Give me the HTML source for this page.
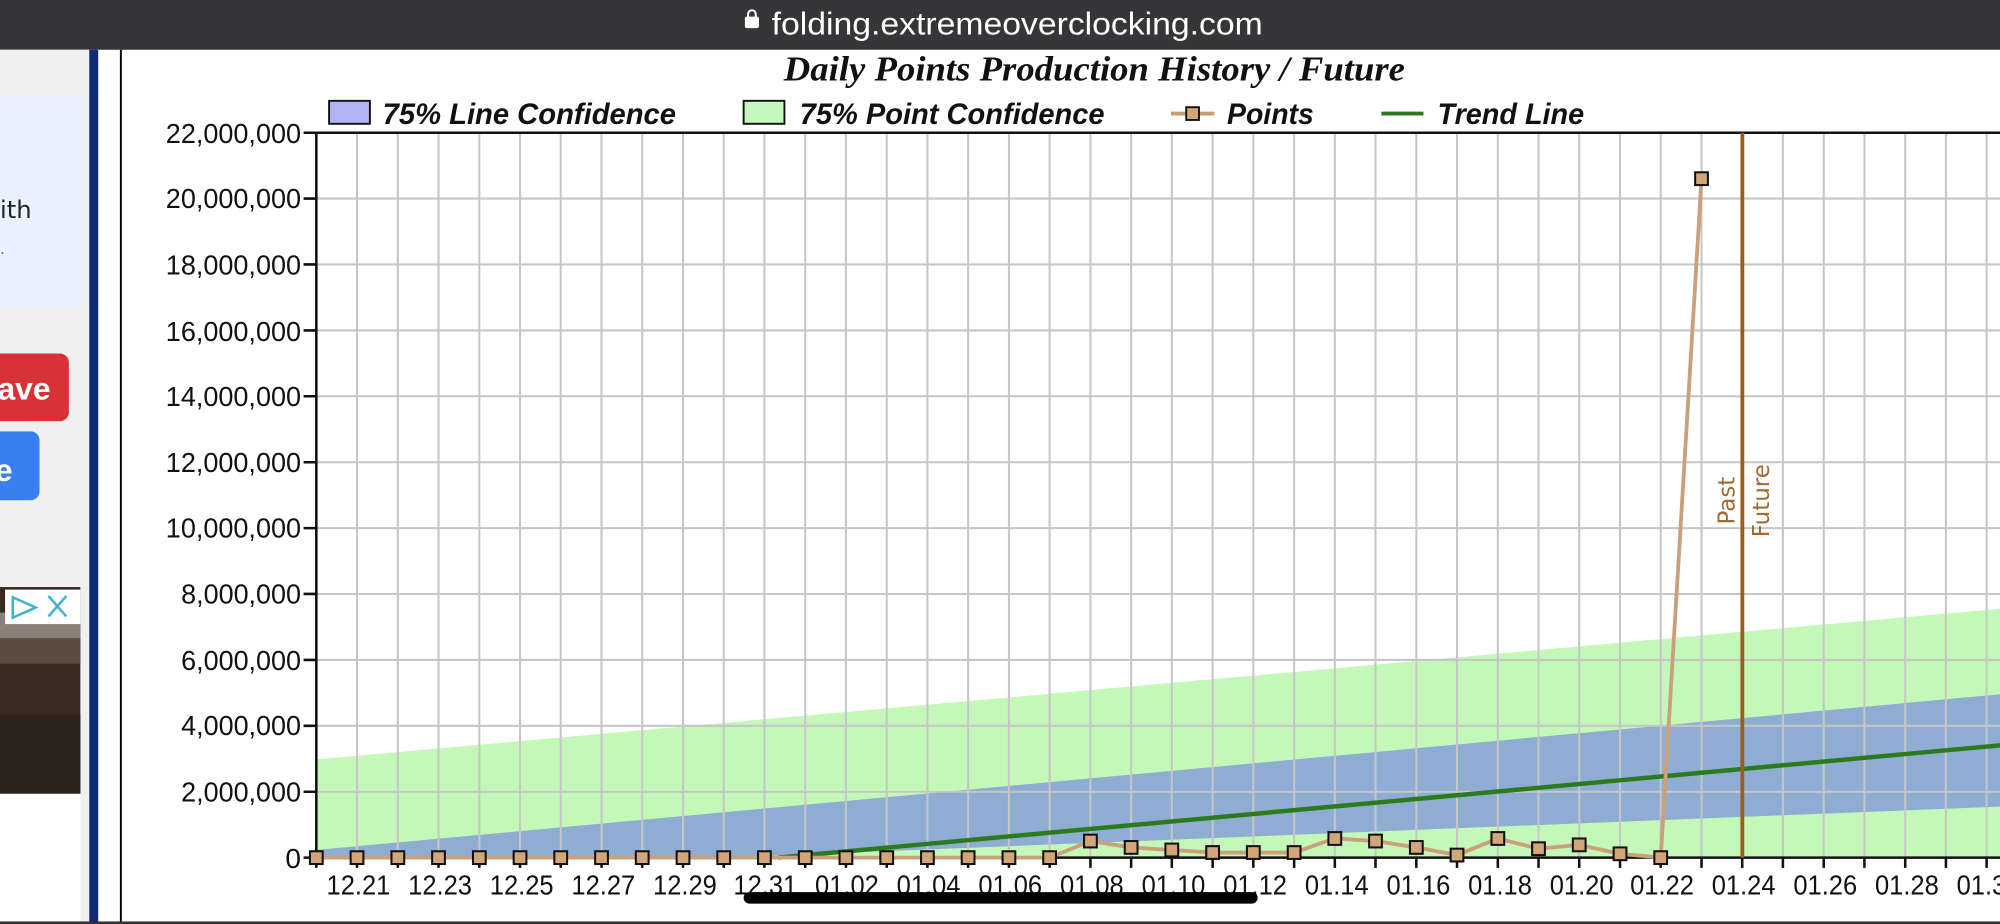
<!DOCTYPE html>
<html><head><meta charset="utf-8"><style>
html,body{margin:0;padding:0;width:2000px;height:924px;overflow:hidden;background:#fff}
svg{display:block}
</style></head><body>
<svg width="2000" height="924" viewBox="0 0 1568 724" preserveAspectRatio="none" xmlns="http://www.w3.org/2000/svg">
<rect x="0" y="0" width="1568" height="724" fill="#fff"/>
<rect x="0" y="0" width="1568" height="39" fill="#363638"/>
<rect x="584" y="13" width="11" height="9" rx="1.5" fill="#fff"/>
<path d="M586.5 13.5 v-2.5 a3 3 0 0 1 6 0 v2.5" fill="none" stroke="#fff" stroke-width="1.6"/>
<text x="605" y="27" font-family="Liberation Sans, sans-serif" font-size="25" fill="#fff" textLength="385" lengthAdjust="spacingAndGlyphs">folding.extremeoverclocking.com</text>
<rect x="0" y="39" width="70" height="685" fill="#f0f0f0"/>
<rect x="0" y="75" width="65" height="165" fill="#e8f1fd"/>
<text x="0" y="171" font-family="DejaVu Sans, sans-serif" font-size="19" fill="#222">ith</text>
<text x="0" y="199" font-family="DejaVu Sans, sans-serif" font-size="12" fill="#666">.</text>
<rect x="-10" y="277" width="64" height="53" rx="7" fill="#d93236"/>
<text x="-2" y="313" font-family="Liberation Sans, sans-serif" font-size="25" font-weight="bold" fill="#fff">ave</text>
<rect x="-10" y="338" width="41" height="54" rx="7" fill="#3a7ff0"/>
<text x="-4" y="377" font-family="Liberation Sans, sans-serif" font-size="25" font-weight="bold" fill="#fff">e</text>
<rect x="0" y="460" width="63" height="162" fill="#3a2a22"/>
<rect x="0" y="480" width="63" height="30" fill="#8a8078"/>
<rect x="0" y="500" width="63" height="20" fill="#5a4c40"/>
<rect x="0" y="560" width="63" height="62" fill="#2e221c"/>
<rect x="4" y="462" width="59" height="27" fill="#fff"/>
<path d="M10 468 L28 476 L10 484 Z" fill="none" stroke="#3fb3d0" stroke-width="2"/>
<path d="M38 467 L52 483 M52 467 L38 483" stroke="#3fb3d0" stroke-width="2"/>
<rect x="0" y="622" width="63" height="102" fill="#fff"/>
<rect x="70" y="39" width="7" height="685" fill="#0d2a78"/>
<rect x="94" y="39" width="1.5" height="685" fill="#000"/>
<text x="858" y="63" text-anchor="middle" font-family="Liberation Serif, serif" font-size="27" font-weight="bold" font-style="italic" fill="#111" textLength="487" lengthAdjust="spacingAndGlyphs">Daily Points Production History / Future</text>
<g font-family="Liberation Sans, sans-serif" font-size="23" font-weight="bold" font-style="italic" fill="#111">
<rect x="258" y="79" width="32" height="18" fill="#b0b4f6" stroke="#111" stroke-width="1.5"/>
<text x="300" y="97" textLength="230" lengthAdjust="spacingAndGlyphs">75% Line Confidence</text>
<rect x="583" y="79" width="32" height="18" fill="#c4f7bd" stroke="#111" stroke-width="1.5"/>
<text x="627" y="97" textLength="239" lengthAdjust="spacingAndGlyphs">75% Point Confidence</text>
<line x1="918" y1="89" x2="952" y2="89" stroke="#c89c70" stroke-width="3"/>
<rect x="930" y="84" width="10" height="10" fill="#d2a679" stroke="#111" stroke-width="1.5"/>
<text x="962" y="97" textLength="68" lengthAdjust="spacingAndGlyphs">Points</text>
<line x1="1083" y1="89" x2="1116" y2="89" stroke="#2c7a1e" stroke-width="3"/>
<text x="1127" y="97" textLength="115" lengthAdjust="spacingAndGlyphs">Trend Line</text>
</g>
<polygon points="248,595 1568,477 1568,672 248,672" fill="#c4f8b8"/>
<polygon points="248,666 1568,544 1568,632 566,672 248,672" fill="#8fadd3"/>
<path stroke="#c6c6c6" stroke-width="1.6" fill="none" d="M279.9 104V672M311.9 104V672M343.8 104V672M375.8 104V672M407.7 104V672M439.6 104V672M471.6 104V672M503.5 104V672M535.5 104V672M567.4 104V672M599.3 104V672M631.3 104V672M663.2 104V672M695.2 104V672M727.1 104V672M759 104V672M791 104V672M822.9 104V672M854.9 104V672M886.8 104V672M918.7 104V672M950.7 104V672M982.6 104V672M1014.6 104V672M1046.5 104V672M1078.4 104V672M1110.4 104V672M1142.3 104V672M1174.3 104V672M1206.2 104V672M1238.1 104V672M1270.1 104V672M1302 104V672M1334 104V672M1397.8 104V672M1429.8 104V672M1461.7 104V672M1493.7 104V672M1525.6 104V672M1557.5 104V672
M248 620.4H1568M248 568.7H1568M248 517.1H1568M248 465.4H1568M248 413.8H1568M248 362.2H1568M248 310.5H1568M248 258.9H1568M248 207.2H1568M248 155.6H1568"/>
<path stroke="#111" stroke-width="2" fill="none" d="M248 104H1568M248 104V672M248 672H1568
M238 104H248M238 155.6H248M238 207.2H248M238 258.9H248M238 310.5H248M238 362.2H248M238 413.8H248M238 465.4H248M238 517.1H248M238 568.7H248M238 620.4H248M238 672H248
M248 672v8M279.9 672v8M311.9 672v8M343.8 672v8M375.8 672v8M407.7 672v8M439.6 672v8M471.6 672v8M503.5 672v8M535.5 672v8M567.4 672v8M599.3 672v8M631.3 672v8M663.2 672v8M695.2 672v8M727.1 672v8M759 672v8M791 672v8M822.9 672v8M854.9 672v8M886.8 672v8M918.7 672v8M950.7 672v8M982.6 672v8M1014.6 672v8M1046.5 672v8M1078.4 672v8M1110.4 672v8M1142.3 672v8M1174.3 672v8M1206.2 672v8M1238.1 672v8M1270.1 672v8M1302 672v8M1334 672v8M1365.9 672v8M1397.8 672v8M1429.8 672v8M1461.7 672v8M1493.7 672v8M1525.6 672v8M1557.5 672v8"/>
<g font-family="Liberation Sans, sans-serif" font-size="22" fill="#111" text-anchor="end" lengthAdjust="spacingAndGlyphs">
<text x="236" y="112" textLength="106" lengthAdjust="spacingAndGlyphs">22,000,000</text>
<text x="236" y="163" textLength="106" lengthAdjust="spacingAndGlyphs">20,000,000</text>
<text x="236" y="215" textLength="106" lengthAdjust="spacingAndGlyphs">18,000,000</text>
<text x="236" y="267" textLength="106" lengthAdjust="spacingAndGlyphs">16,000,000</text>
<text x="236" y="318" textLength="106" lengthAdjust="spacingAndGlyphs">14,000,000</text>
<text x="236" y="370" textLength="106" lengthAdjust="spacingAndGlyphs">12,000,000</text>
<text x="236" y="421" textLength="106" lengthAdjust="spacingAndGlyphs">10,000,000</text>
<text x="236" y="473" textLength="94" lengthAdjust="spacingAndGlyphs">8,000,000</text>
<text x="236" y="525" textLength="94" lengthAdjust="spacingAndGlyphs">6,000,000</text>
<text x="236" y="576" textLength="94" lengthAdjust="spacingAndGlyphs">4,000,000</text>
<text x="236" y="628" textLength="94" lengthAdjust="spacingAndGlyphs">2,000,000</text>
<text x="236" y="680">0</text>
</g>
<g font-family="Liberation Sans, sans-serif" font-size="22" fill="#111" text-anchor="middle">
<text x="281" y="701" textLength="50" lengthAdjust="spacingAndGlyphs">12.21</text><text x="345" y="701" textLength="50" lengthAdjust="spacingAndGlyphs">12.23</text><text x="409" y="701" textLength="50" lengthAdjust="spacingAndGlyphs">12.25</text><text x="473" y="701" textLength="50" lengthAdjust="spacingAndGlyphs">12.27</text><text x="537" y="701" textLength="50" lengthAdjust="spacingAndGlyphs">12.29</text><text x="600" y="701" textLength="50" lengthAdjust="spacingAndGlyphs">12.31</text><text x="664" y="701" textLength="50" lengthAdjust="spacingAndGlyphs">01.02</text><text x="728" y="701" textLength="50" lengthAdjust="spacingAndGlyphs">01.04</text><text x="792" y="701" textLength="50" lengthAdjust="spacingAndGlyphs">01.06</text><text x="856" y="701" textLength="50" lengthAdjust="spacingAndGlyphs">01.08</text><text x="920" y="701" textLength="50" lengthAdjust="spacingAndGlyphs">01.10</text><text x="984" y="701" textLength="50" lengthAdjust="spacingAndGlyphs">01.12</text><text x="1048" y="701" textLength="50" lengthAdjust="spacingAndGlyphs">01.14</text><text x="1112" y="701" textLength="50" lengthAdjust="spacingAndGlyphs">01.16</text><text x="1176" y="701" textLength="50" lengthAdjust="spacingAndGlyphs">01.18</text><text x="1240" y="701" textLength="50" lengthAdjust="spacingAndGlyphs">01.20</text><text x="1303" y="701" textLength="50" lengthAdjust="spacingAndGlyphs">01.22</text><text x="1367" y="701" textLength="50" lengthAdjust="spacingAndGlyphs">01.24</text><text x="1431" y="701" textLength="50" lengthAdjust="spacingAndGlyphs">01.26</text><text x="1495" y="701" textLength="50" lengthAdjust="spacingAndGlyphs">01.28</text><text x="1559" y="701" textLength="50" lengthAdjust="spacingAndGlyphs">01.30</text>
</g>
<line x1="610" y1="672" x2="1568" y2="584" stroke="#2c7a1e" stroke-width="3.5"/>
<line x1="1366" y1="104" x2="1366" y2="672" stroke="#9b5c1e" stroke-width="3"/>
<text transform="translate(1360,411) rotate(-90)" font-family="DejaVu Sans, sans-serif" font-size="18" fill="#a06a30">Past</text>
<text transform="translate(1387,421) rotate(-90)" font-family="DejaVu Sans, sans-serif" font-size="18" fill="#a06a30">Future</text>
<polyline fill="none" stroke="#caa07a" stroke-width="3" points="248,672 279.9,672 311.9,672 343.8,672 375.8,672 407.7,672 439.6,672 471.6,672 503.5,672 535.5,672 567.4,672 599.3,672 631.3,672 663.2,672 695.2,672 727.1,672 759,672 791,672 822.9,672 854.9,659 886.8,664 918.7,666 950.7,668 982.6,668 1014.6,668 1046.5,657 1078.4,659 1110.4,664 1142.3,670 1174.3,657 1206.2,665 1238.1,662 1270.1,669 1302,672 1334,140"/>
<g fill="#d2a679" stroke="#111" stroke-width="1.6">
<rect x="243" y="667" width="10" height="10"/><rect x="274.9" y="667" width="10" height="10"/><rect x="306.9" y="667" width="10" height="10"/><rect x="338.8" y="667" width="10" height="10"/><rect x="370.8" y="667" width="10" height="10"/><rect x="402.7" y="667" width="10" height="10"/><rect x="434.6" y="667" width="10" height="10"/><rect x="466.6" y="667" width="10" height="10"/><rect x="498.5" y="667" width="10" height="10"/><rect x="530.5" y="667" width="10" height="10"/><rect x="562.4" y="667" width="10" height="10"/><rect x="594.3" y="667" width="10" height="10"/><rect x="626.3" y="667" width="10" height="10"/><rect x="658.2" y="667" width="10" height="10"/><rect x="690.2" y="667" width="10" height="10"/><rect x="722.1" y="667" width="10" height="10"/><rect x="754" y="667" width="10" height="10"/><rect x="786" y="667" width="10" height="10"/><rect x="817.9" y="667" width="10" height="10"/>
<rect x="849.9" y="654" width="10" height="10"/><rect x="881.8" y="659" width="10" height="10"/><rect x="913.7" y="661" width="10" height="10"/><rect x="945.7" y="663" width="10" height="10"/><rect x="977.6" y="663" width="10" height="10"/><rect x="1009.6" y="663" width="10" height="10"/><rect x="1041.5" y="652" width="10" height="10"/><rect x="1073.4" y="654" width="10" height="10"/><rect x="1105.4" y="659" width="10" height="10"/><rect x="1137.3" y="665" width="10" height="10"/><rect x="1169.3" y="652" width="10" height="10"/><rect x="1201.2" y="660" width="10" height="10"/><rect x="1233.1" y="657" width="10" height="10"/><rect x="1265.1" y="664" width="10" height="10"/><rect x="1297" y="667" width="10" height="10"/><rect x="1329" y="135" width="10" height="10"/>
</g>
<rect x="583" y="699" width="403" height="9" rx="4.5" fill="#000"/>
<rect x="0" y="722" width="1568" height="2" fill="#333"/>
</svg>
</body></html>
